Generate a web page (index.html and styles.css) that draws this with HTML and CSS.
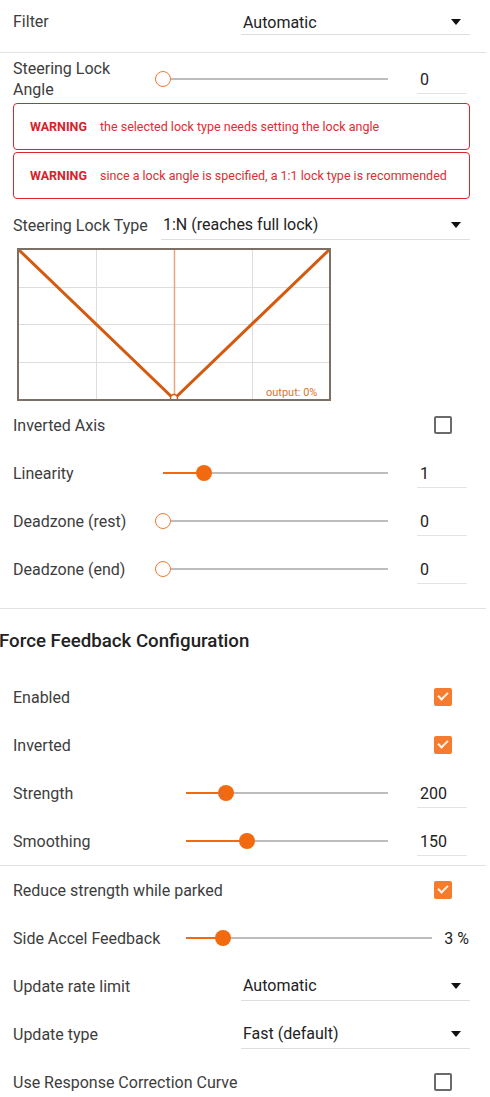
FILE: index.html
```html
<!DOCTYPE html>
<html lang="en">
<head>
    <meta charset="UTF-8">
    <meta name="viewport" content="width=device-width, initial-scale=1.0">
    <title>Steering Settings</title>
    <link rel="stylesheet" href="styles.css">
</head>
<body>

<div class="panel">
    <!-- Filter -->
    <div class="row row-top divided">
        <span class="label">Filter</span>
        <div class="select wide">Automatic<span class="caret"></span></div>
    </div>

    <!-- Steering lock angle -->
    <div class="row row-lock">
        <span class="label label-narrow">Steering Lock Angle</span>
        <div class="slider">
            <div class="fill" style="width: 0%"></div>
            <div class="thumb empty" style="left: 0%"></div>
        </div>
        <div class="value">0</div>
    </div>

    <div class="warning"><b>WARNING</b><span>the selected lock type needs setting the lock angle</span></div>
    <div class="warning"><b>WARNING</b><span>since a lock angle is specified, a 1:1 lock type is recommended</span></div>

    <div class="row row-type">
        <span class="label">Steering Lock Type</span>
        <div class="select type">1:N (reaches full lock)<span class="caret"></span></div>
    </div>

    <!-- Response curve preview -->
    <svg class="chart" width="314" height="153" viewBox="0 0 314 153">
        <g stroke="#dddddd" stroke-width="1">
            <line x1="79.5" y1="0" x2="79.5" y2="153"/>
            <line x1="235.5" y1="0" x2="235.5" y2="153"/>
            <line x1="0" y1="39.5" x2="314" y2="39.5"/>
            <line x1="0" y1="76.5" x2="314" y2="76.5"/>
            <line x1="0" y1="114.5" x2="314" y2="114.5"/>
        </g>
        <line x1="157.5" y1="0" x2="157.5" y2="153" stroke="#eca27a" stroke-width="1.5"/>
        <polyline points="2,2 157,151 312,2" fill="none" stroke="#d45a10" stroke-width="3"/>
        <circle cx="157" cy="150" r="3.5" fill="#fff" stroke="#d45a10" stroke-width="1.5"/>
        <text x="249" y="148" class="chart-text">output: 0%</text>
        <rect x="1" y="1" width="312" height="151" fill="none" stroke="#7b6f66" stroke-width="2"/>
    </svg>

    <div class="row">
        <span class="label">Inverted Axis</span>
        <span class="checkbox"></span>
    </div>

    <div class="row">
        <span class="label label-narrow">Linearity</span>
        <div class="slider">
            <div class="fill" style="width: 18%"></div>
            <div class="thumb" style="left: 18%"></div>
        </div>
        <div class="value">1</div>
    </div>

    <div class="row">
        <span class="label label-narrow">Deadzone (rest)</span>
        <div class="slider">
            <div class="fill" style="width: 0%"></div>
            <div class="thumb empty" style="left: 0%"></div>
        </div>
        <div class="value">0</div>
    </div>

    <div class="row">
        <span class="label label-narrow">Deadzone (end)</span>
        <div class="slider">
            <div class="fill" style="width: 0%"></div>
            <div class="thumb empty" style="left: 0%"></div>
        </div>
        <div class="value">0</div>
    </div>

    <hr class="divider">

    <h2 class="section-title">Force Feedback Configuration</h2>

    <div class="row">
        <span class="label">Enabled</span>
        <span class="checkbox checked"></span>
    </div>

    <div class="row">
        <span class="label">Inverted</span>
        <span class="checkbox checked"></span>
    </div>

    <div class="row">
        <span class="label label-ffb">Strength</span>
        <div class="slider">
            <div class="fill" style="width: 20%"></div>
            <div class="thumb" style="left: 20%"></div>
        </div>
        <div class="value">200</div>
    </div>

    <div class="row divided">
        <span class="label label-ffb">Smoothing</span>
        <div class="slider">
            <div class="fill" style="width: 30%"></div>
            <div class="thumb" style="left: 30%"></div>
        </div>
        <div class="value">150</div>
    </div>

    <div class="row">
        <span class="label">Reduce strength while parked</span>
        <span class="checkbox checked"></span>
    </div>

    <div class="row">
        <span class="label label-ffb">Side Accel Feedback</span>
        <div class="slider long">
            <div class="fill" style="width: 15%"></div>
            <div class="thumb" style="left: 15%"></div>
        </div>
        <div class="percent">3 %</div>
    </div>

    <div class="row">
        <span class="label">Update rate limit</span>
        <div class="select wide">Automatic<span class="caret"></span></div>
    </div>

    <div class="row">
        <span class="label">Update type</span>
        <div class="select wide">Fast (default)<span class="caret"></span></div>
    </div>

    <div class="row">
        <span class="label">Use Response Correction Curve</span>
        <span class="checkbox"></span>
    </div>
</div>

</body>
</html>
```

FILE: styles.css
```css
body {
    margin: 0;
    font-family: Roboto, "Liberation Sans", Arial, sans-serif;
    color: #3d3d3d;
    background: #fff;
}

.panel {
    width: 486px;
}

/* One settings line */
.row {
    display: flex;
    align-items: center;
    height: 48px;
    padding: 0 19px 0 13px;
    font-size: 16px;
}

.divided {
    border-bottom: 1px solid #e2e2e2;
}

.row-top {
    height: 53px;
    align-items: flex-start;
    padding-top: 11px;
    box-sizing: border-box;
}

.row-lock {
    height: 48px;
    padding-top: 4px;
    box-sizing: border-box;
}

.row-type {
    height: 46px;
    margin-top: 3px;
}

.label {
    flex: none;
    line-height: 21px;
}

.label-narrow {
    width: 150px;
}

.row-lock .label {
    width: 130px;
    margin-right: 20px;
}

.label-ffb {
    width: 173px;
}

/* Dropdowns */
.select {
    position: relative;
    margin-left: auto;
    margin-right: -3px;
    height: 30px;
    line-height: 30px;
    padding-left: 2px;
    border-bottom: 1px solid #dedede;
    color: #222;
    box-sizing: border-box;
}

.row-top .select {
    margin-top: -2px;
    height: 26px;
    line-height: 28px;
}

.select.wide {
    width: 229px;
}

.select.type {
    width: 309px;
}

.caret {
    position: absolute;
    right: 9px;
    top: 50%;
    margin-top: -3px;
    border-left: 5px solid transparent;
    border-right: 5px solid transparent;
    border-top: 6px solid #111;
}

/* Sliders */
.slider {
    position: relative;
    width: 225px;
    height: 2px;
    background: #bdbdbd;
}

.label-ffb + .slider {
    width: 202px;
}

.slider.long {
    width: 246px;
}

.fill {
    height: 2px;
    background: #f26a10;
}

.thumb {
    position: absolute;
    top: 1px;
    width: 16px;
    height: 16px;
    margin: -8px 0 0 -8px;
    border-radius: 50%;
    background: #f26a10;
    box-sizing: border-box;
}

.thumb.empty {
    background: #fff;
    border: 1.5px solid #f27a30;
}

.value {
    width: 50px;
    margin-left: 29px;
    height: 28px;
    line-height: 28px;
    padding-left: 3px;
    margin-top: 1px;
    border-bottom: 1px solid #e3e3e3;
    box-sizing: border-box;
    color: #222;
}

.percent {
    margin-left: auto;
    margin-right: -2px;
    color: #222;
}

/* Checkboxes */
.checkbox {
    margin-left: auto;
    margin-right: 15px;
    width: 18px;
    height: 18px;
    border: 2px solid #6a6a6a;
    border-radius: 2px;
    box-sizing: border-box;
    position: relative;
}

.checkbox.checked {
    border: none;
    background: #f57c2e;
}

.checkbox.checked::after {
    content: "";
    position: absolute;
    left: 4px;
    top: 4px;
    width: 8px;
    height: 4px;
    border-left: 2px solid #fff3e8;
    border-bottom: 2px solid #fff3e8;
    transform: rotate(-45deg);
}

/* Warnings */
.warning {
    display: flex;
    align-items: center;
    height: 47px;
    margin: 2px 16px 0 13px;
    padding-left: 16px;
    border: 1px solid #d7262e;
    border-radius: 4px;
    box-sizing: border-box;
    font-size: 12.5px;
    color: #e02c35;
}

.warning b {
    width: 70px;
    color: #d7222b;
}

/* Chart */
.chart {
    display: block;
    margin: 0 0 0 17px;
}

.chart-text {
    font-family: Roboto, "Liberation Sans", Arial, sans-serif;
    font-size: 11px;
    fill: #e0732a;
}

.divider {
    margin: 15px 0 0 0;
    border: none;
    border-top: 1px solid #e2e2e2;
}

.section-title {
    margin: 0 0 0 -1px;
    height: 64px;
    line-height: 64px;
    font-size: 18.7px;
    font-weight: 500;
    color: #222;
}
```
